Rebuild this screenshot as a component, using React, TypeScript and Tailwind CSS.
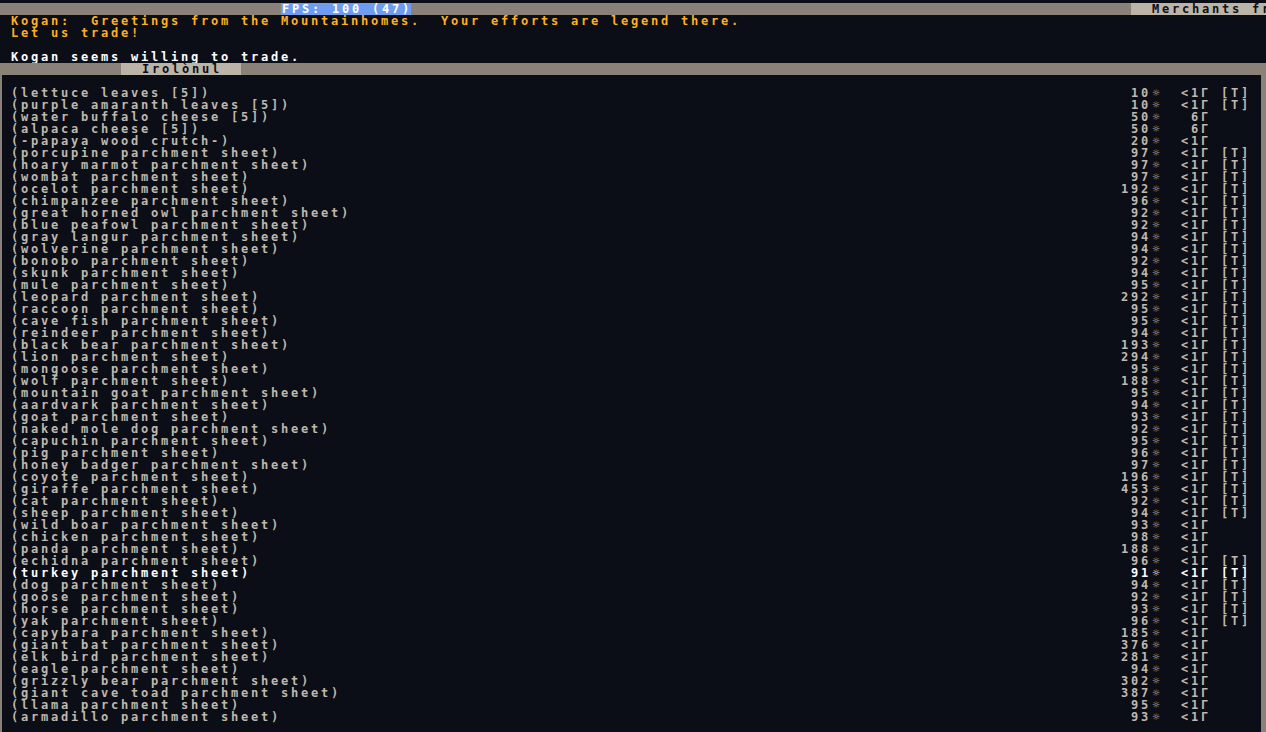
type Item = { name: string; value: number; dist: string; tag: boolean; sel?: boolean };

const items: Item[] = [
  { name: '(lettuce leaves [5])', value: 10, dist: '<1', tag: true },
  { name: '(purple amaranth leaves [5])', value: 10, dist: '<1', tag: true },
  { name: '(water buffalo cheese [5])', value: 50, dist: '6', tag: false },
  { name: '(alpaca cheese [5])', value: 50, dist: '6', tag: false },
  { name: '(-papaya wood crutch-)', value: 20, dist: '<1', tag: false },
  { name: '(porcupine parchment sheet)', value: 97, dist: '<1', tag: true },
  { name: '(hoary marmot parchment sheet)', value: 97, dist: '<1', tag: true },
  { name: '(wombat parchment sheet)', value: 97, dist: '<1', tag: true },
  { name: '(ocelot parchment sheet)', value: 192, dist: '<1', tag: true },
  { name: '(chimpanzee parchment sheet)', value: 96, dist: '<1', tag: true },
  { name: '(great horned owl parchment sheet)', value: 92, dist: '<1', tag: true },
  { name: '(blue peafowl parchment sheet)', value: 92, dist: '<1', tag: true },
  { name: '(gray langur parchment sheet)', value: 94, dist: '<1', tag: true },
  { name: '(wolverine parchment sheet)', value: 94, dist: '<1', tag: true },
  { name: '(bonobo parchment sheet)', value: 92, dist: '<1', tag: true },
  { name: '(skunk parchment sheet)', value: 94, dist: '<1', tag: true },
  { name: '(mule parchment sheet)', value: 95, dist: '<1', tag: true },
  { name: '(leopard parchment sheet)', value: 292, dist: '<1', tag: true },
  { name: '(raccoon parchment sheet)', value: 95, dist: '<1', tag: true },
  { name: '(cave fish parchment sheet)', value: 95, dist: '<1', tag: true },
  { name: '(reindeer parchment sheet)', value: 94, dist: '<1', tag: true },
  { name: '(black bear parchment sheet)', value: 193, dist: '<1', tag: true },
  { name: '(lion parchment sheet)', value: 294, dist: '<1', tag: true },
  { name: '(mongoose parchment sheet)', value: 95, dist: '<1', tag: true },
  { name: '(wolf parchment sheet)', value: 188, dist: '<1', tag: true },
  { name: '(mountain goat parchment sheet)', value: 95, dist: '<1', tag: true },
  { name: '(aardvark parchment sheet)', value: 94, dist: '<1', tag: true },
  { name: '(goat parchment sheet)', value: 93, dist: '<1', tag: true },
  { name: '(naked mole dog parchment sheet)', value: 92, dist: '<1', tag: true },
  { name: '(capuchin parchment sheet)', value: 95, dist: '<1', tag: true },
  { name: '(pig parchment sheet)', value: 96, dist: '<1', tag: true },
  { name: '(honey badger parchment sheet)', value: 97, dist: '<1', tag: true },
  { name: '(coyote parchment sheet)', value: 196, dist: '<1', tag: true },
  { name: '(giraffe parchment sheet)', value: 453, dist: '<1', tag: true },
  { name: '(cat parchment sheet)', value: 92, dist: '<1', tag: true },
  { name: '(sheep parchment sheet)', value: 94, dist: '<1', tag: true },
  { name: '(wild boar parchment sheet)', value: 93, dist: '<1', tag: false },
  { name: '(chicken parchment sheet)', value: 98, dist: '<1', tag: false },
  { name: '(panda parchment sheet)', value: 188, dist: '<1', tag: false },
  { name: '(echidna parchment sheet)', value: 96, dist: '<1', tag: true },
  { name: '(turkey parchment sheet)', value: 91, dist: '<1', tag: true, sel: true },
  { name: '(dog parchment sheet)', value: 94, dist: '<1', tag: true },
  { name: '(goose parchment sheet)', value: 92, dist: '<1', tag: true },
  { name: '(horse parchment sheet)', value: 93, dist: '<1', tag: true },
  { name: '(yak parchment sheet)', value: 96, dist: '<1', tag: true },
  { name: '(capybara parchment sheet)', value: 185, dist: '<1', tag: false },
  { name: '(giant bat parchment sheet)', value: 376, dist: '<1', tag: false },
  { name: '(elk bird parchment sheet)', value: 281, dist: '<1', tag: false },
  { name: '(eagle parchment sheet)', value: 94, dist: '<1', tag: false },
  { name: '(grizzly bear parchment sheet)', value: 302, dist: '<1', tag: false },
  { name: '(giant cave toad parchment sheet)', value: 387, dist: '<1', tag: false },
  { name: '(llama parchment sheet)', value: 95, dist: '<1', tag: false },
  { name: '(armadillo parchment sheet)', value: 93, dist: '<1', tag: false },
];

// every glyph sits in a 10px wide cell, like the game's tile grid
const cell = 'whitespace-pre tracking-[2.775px]';

function Row({ item }: { item: Item }) {
  return (
    <div className={`flex h-[12px] ${item.sel ? 'text-white' : 'text-[#c0b8ac]'}`}>
      <span className={`${cell} w-[1109px] shrink-0 pl-[9px]`}>{item.name}</span>
      <span className={`${cell} w-[40px] shrink-0 text-right`}>{String(item.value)}</span>
      <span className="w-[10px] h-[12px] shrink-0 overflow-hidden text-center">☼</span>
      <span className={`${cell} w-[50px] shrink-0 text-right`}>{`${item.dist}Γ`}</span>
      <span className={`${cell} pl-[10px]`}>{item.tag ? '[T]' : ''}</span>
    </div>
  );
}

export default function App() {
  return (
    <div
      className="w-[1266px] h-[732px] overflow-hidden bg-[#0b0e17] flex flex-col text-[12px] leading-[12px] font-bold"
      style={{ fontFamily: '"DejaVu Sans Mono", "Liberation Mono", monospace' }}
    >
      <div className="h-[3px] shrink-0" />

      {/* status bar */}
      <div className="h-[12px] shrink-0 flex bg-[#8a8279]">
        <div className="w-[281px] shrink-0" />
        <span className={`${cell} w-[130px] shrink-0 bg-[#6e9cf0] text-white pl-[1px]`}>FPS: 100 (47)</span>
        <div className="flex-1" />
        <span className={`${cell} w-[135px] shrink-0 overflow-hidden bg-[#bdb4a8] text-[#0b0e17] pl-[1px]`}>
          {'  Merchants fr'}
        </span>
      </div>

      {/* announcement */}
      <div className="shrink-0 pl-[11px]">
        <div className={`${cell} h-[12px] text-[#ffb020]`}>
          Kogan:  Greetings from the Mountainhomes.  Your efforts are legend there.
        </div>
        <div className={`${cell} h-[12px] text-[#ffb020]`}>Let us trade!</div>
        <div className="h-[12px]" />
        <div className={`${cell} h-[12px] text-white`}>Kogan seems willing to trade.</div>
      </div>

      {/* tab bar */}
      <div className="h-[12px] shrink-0 flex bg-[#8a8279]">
        <div className="w-[121px] shrink-0" />
        <span className={`${cell} w-[120px] shrink-0 bg-[#bdb4a8] text-[#0b0e17] pl-[1px]`}>{'  Irolònul'}</span>
      </div>

      {/* goods list */}
      <div className="flex-1 border-l-2 border-r-[5px] border-[#8a8279] pt-[12px]">
        {items.map((it) => (
          <Row key={it.name} item={it} />
        ))}
      </div>
    </div>
  );
}
